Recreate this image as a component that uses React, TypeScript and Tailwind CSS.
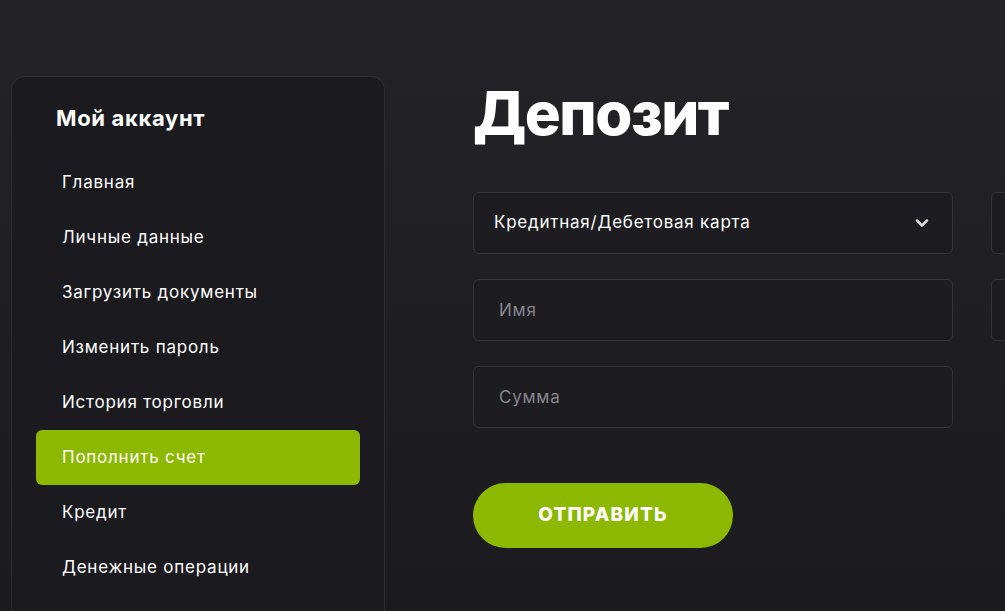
import { ChevronDown } from 'lucide-react'

const menu = [
  'Главная',
  'Личные данные',
  'Загрузить документы',
  'Изменить пароль',
  'История торговли',
  'Пополнить счет',
  'Кредит',
  'Денежные операции',
]

export default function App() {
  return (
    <div
      className="h-[611px] w-full overflow-hidden bg-gradient-to-b from-[#242328] to-[#1b1a1f] text-white"
      style={{ fontFamily: 'Inter, "Noto Sans", sans-serif' }}
    >
      <div className="flex gap-[88px] pl-[11px] pt-[76px]">
        {/* Sidebar */}
        <aside className="w-[374px] shrink-0 rounded-t-[14px] border border-b-0 border-[#2e2d33] bg-[#1b1a1f] px-6 pt-[24px] pb-6">
          <h3 className="mb-[20px] pl-[20px] text-[22px] font-bold leading-[34px] tracking-[0.03em]">Мой аккаунт</h3>
          <nav className="flex flex-col">
            {menu.map((item) => (
              <a
                key={item}
                href="#"
                className={`flex h-[55px] items-center rounded-[6px] pl-[26px] text-[17px] tracking-[0.045em] ${
                  item === 'Пополнить счет' ? 'bg-[#8cb800]' : ''
                }`}
              >
                {item}
              </a>
            ))}
          </nav>
        </aside>

        {/* Main */}
        <main className="min-w-0 flex-1 pt-[2px]">
          <h1 className="text-[60px] font-extrabold leading-[70px] tracking-tight">Депозит</h1>

          <div className="mt-[44px] grid grid-cols-[480px_480px] gap-x-[38px] gap-y-[25px]">
            <div className="flex h-[62px] items-center justify-between rounded-[6px] border border-[#34333a] bg-[#1d1c21] pl-5 pr-5">
              <span className="text-[17px] tracking-[0.045em]">Кредитная/Дебетовая карта</span>
              <ChevronDown className="h-5 w-5 text-[#d9d9d9]" strokeWidth={3} />
            </div>
            <div className="h-[62px] rounded-[6px] border border-[#34333a] bg-[#1d1c21]" />
            <input
              placeholder="Имя"
              className="h-[62px] rounded-[6px] border border-[#34333a] bg-[#1d1c21] px-[25px] text-[17px] tracking-[0.045em] outline-none placeholder:text-[#86858b]"
            />
            <div className="h-[62px] rounded-[6px] border border-[#34333a] bg-[#1d1c21]" />
            <input
              placeholder="Сумма"
              className="h-[62px] rounded-[6px] border border-[#34333a] bg-[#1d1c21] px-[25px] text-[17px] tracking-[0.045em] outline-none placeholder:text-[#86858b]"
            />
          </div>

          <button className="mt-[55px] h-[65px] w-[260px] rounded-full bg-[#8cb800] text-[19px] font-extrabold uppercase tracking-[0.06em]">
            Отправить
          </button>
        </main>
      </div>
    </div>
  )
}
